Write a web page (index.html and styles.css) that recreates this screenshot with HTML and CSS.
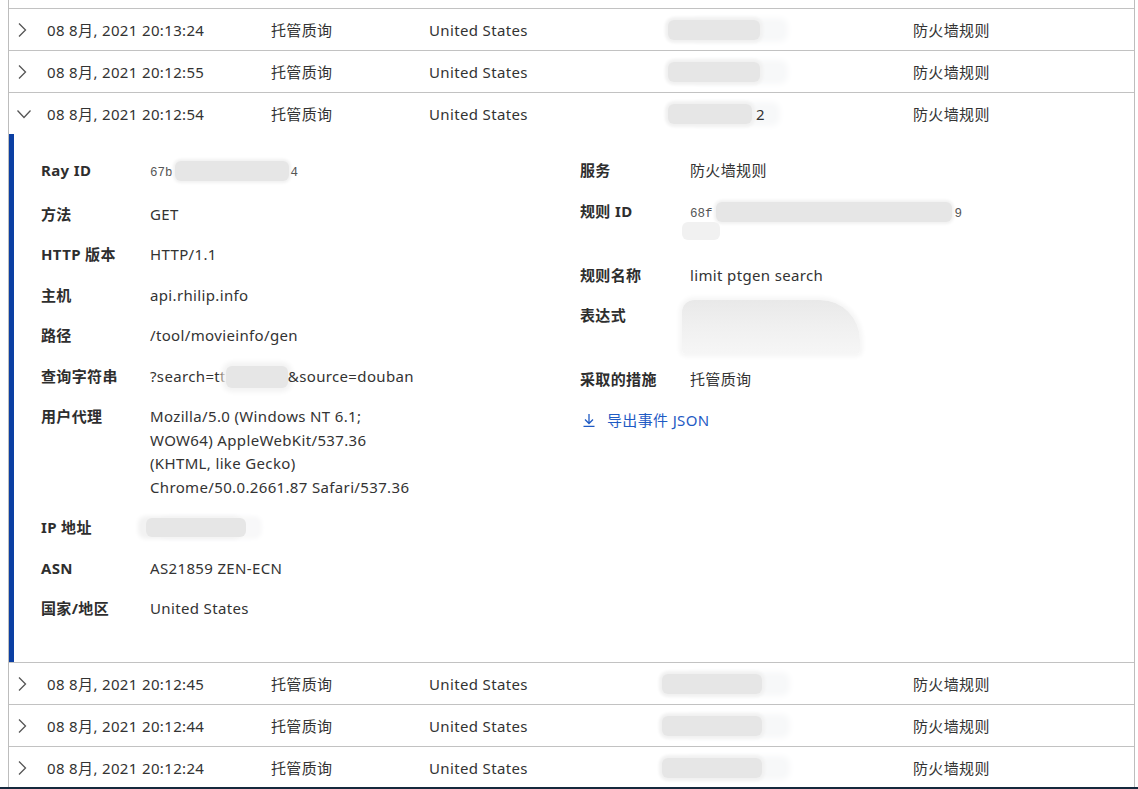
FILE: index.html
```html
<!doctype html>
<html>
<head>
	<title>防火墙事件</title>
	<meta charset="utf-8"/>
	<link rel="stylesheet" href="styles.css">
</head>
<body>

	<div class="events">
		<div class="row-clip"></div>

		<div class="event">
			<div class="event-head">
				<span class="toggle"><svg width="10" height="16" viewBox="0 0 10 16"><path d="M2 1.5 L8.5 8 L2 14.5" /></svg></span>
				<span>08 8月, 2021 20:13:24</span>
				<span>托管质询</span>
				<span>United States</span>
				<span><span class="blur blur-ip"></span></span>
				<span>防火墙规则</span>
			</div>
		</div>

		<div class="event">
			<div class="event-head">
				<span class="toggle"><svg width="10" height="16" viewBox="0 0 10 16"><path d="M2 1.5 L8.5 8 L2 14.5" /></svg></span>
				<span>08 8月, 2021 20:12:55</span>
				<span>托管质询</span>
				<span>United States</span>
				<span><span class="blur blur-ip"></span></span>
				<span>防火墙规则</span>
			</div>
		</div>

		<div class="event open">
			<div class="event-head">
				<span class="toggle"><svg width="16" height="10" viewBox="0 0 16 10"><path d="M1.5 1.5 L8 8.5 L14.5 1.5" /></svg></span>
				<span>08 8月, 2021 20:12:54</span>
				<span>托管质询</span>
				<span>United States</span>
				<span><span class="blur blur-ip-short"></span>2</span>
				<span>防火墙规则</span>
			</div>

			<div class="event-detail">
				<dl class="fields">
					<div class="field first">
						<dt>Ray ID</dt>
						<dd><span class="mono">67b</span><span class="blur blur-ray"></span><span class="mono">4</span></dd>
					</div>
					<div class="field">
						<dt>方法</dt>
						<dd>GET</dd>
					</div>
					<div class="field">
						<dt>HTTP 版本</dt>
						<dd>HTTP/1.1</dd>
					</div>
					<div class="field">
						<dt>主机</dt>
						<dd>api.rhilip.info</dd>
					</div>
					<div class="field">
						<dt>路径</dt>
						<dd>/tool/movieinfo/gen</dd>
					</div>
					<div class="field">
						<dt>查询字符串</dt>
						<dd>?search=tt<span class="blur blur-query"></span>&amp;source=douban</dd>
					</div>
					<div class="field">
						<dt>用户代理</dt>
						<dd class="ua">Mozilla/5.0 (Windows NT 6.1; WOW64) AppleWebKit/537.36 (KHTML, like Gecko) Chrome/50.0.2661.87 Safari/537.36</dd>
					</div>
					<div class="field">
						<dt>IP 地址</dt>
						<dd><span class="blur blur-addr"></span></dd>
					</div>
					<div class="field">
						<dt>ASN</dt>
						<dd>AS21859 ZEN-ECN</dd>
					</div>
					<div class="field">
						<dt>国家/地区</dt>
						<dd>United States</dd>
					</div>
				</dl>

				<dl class="fields fields-side">
					<div class="field">
						<dt>服务</dt>
						<dd>防火墙规则</dd>
					</div>
					<div class="field">
						<dt>规则 ID</dt>
						<dd class="two-lines">
							<div><span class="mono">68f</span><span class="blur blur-rule"></span><span class="mono">9</span></div>
							<div><span class="blur blur-rule-tail"></span></div>
						</dd>
					</div>
					<div class="field">
						<dt>规则名称</dt>
						<dd>limit ptgen search</dd>
					</div>
					<div class="field">
						<dt>表达式</dt>
						<dd class="two-lines"><span class="blur blur-expr"></span></dd>
					</div>
					<div class="field">
						<dt>采取的措施</dt>
						<dd>托管质询</dd>
					</div>
					<a class="export" href="#">
						<svg width="12" height="14" viewBox="0 0 12 14"><path d="M6 1 V10.5 M2 6.5 L6 10.5 L10 6.5 M0.5 13.3 H11.5" /></svg>
						导出事件 JSON
					</a>
				</dl>
			</div>
		</div>

		<div class="event">
			<div class="event-head">
				<span class="toggle"><svg width="10" height="16" viewBox="0 0 10 16"><path d="M2 1.5 L8.5 8 L2 14.5" /></svg></span>
				<span>08 8月, 2021 20:12:45</span>
				<span>托管质询</span>
				<span>United States</span>
				<span><span class="blur blur-ip blur-wide"></span></span>
				<span>防火墙规则</span>
			</div>
		</div>

		<div class="event">
			<div class="event-head">
				<span class="toggle"><svg width="10" height="16" viewBox="0 0 10 16"><path d="M2 1.5 L8.5 8 L2 14.5" /></svg></span>
				<span>08 8月, 2021 20:12:44</span>
				<span>托管质询</span>
				<span>United States</span>
				<span><span class="blur blur-ip blur-wide"></span></span>
				<span>防火墙规则</span>
			</div>
		</div>

		<div class="event last">
			<div class="event-head">
				<span class="toggle"><svg width="10" height="16" viewBox="0 0 10 16"><path d="M2 1.5 L8.5 8 L2 14.5" /></svg></span>
				<span>08 8月, 2021 20:12:24</span>
				<span>托管质询</span>
				<span>United States</span>
				<span><span class="blur blur-ip blur-wide"></span></span>
				<span>防火墙规则</span>
			</div>
		</div>
	</div>

	<div class="taskbar"></div>
</body>
</html>
```

FILE: styles.css
```css
body{
	margin: 0;
	background-color: #fff;
	color: #333;
	font-family: "Noto Sans", "Noto Sans CJK SC", sans-serif;
	font-size: 15px;
	letter-spacing: 0.35px;
}
.events{
	margin-left: 8px;
	width: 1127px;
	box-sizing: border-box;
	border-left: 1px solid #bdbdbd;
	border-right: 1px solid #bdbdbd;
}
.row-clip{
	height: 8px;
	border-bottom: 1px solid #c2c2c2;
}
.event{
	border-bottom: 1px solid #c2c2c2;
}
.event-head{
	display: grid;
	grid-template-columns: 38px 224px 158px 239px 245px 1fr;
	align-items: center;
	height: 41px;
	line-height: 20px;
	white-space: nowrap;
}
.toggle{
	display: flex;
	align-items: center;
	padding-left: 8px;
}
.open .toggle{
	padding-left: 7px;
}
.toggle svg path{
	fill: none;
	stroke: #555;
	stroke-width: 1.3;
}

/* blurred-out values */
.blur{
	display: inline-block;
	vertical-align: top;
	height: 20px;
	background-color: #e6e6e6;
	border-radius: 6px;
	box-shadow: 0 0 3px 3px #f1f1f1, 26px 0 6px 2px #f7f8f9;
}
.field .blur{
	margin-top: 2px;
}
.blur-ip{
	width: 92px;
}
.blur-ip-short{
	width: 84px;
	margin-right: 4px;
}
.blur-wide{
	margin-left: -6px;
	width: 100px;
}
.blur-ray{
	width: 114px;
	margin: 0 2px;
	box-shadow: 0 0 3px 2px #f1f1f1;
}
.field .blur-query{
	width: 62px;
	height: 22px;
	margin-top: 1px;
	box-shadow: 0 0 5px 4px #f3f3f3;
}
.field .blur-addr{
	width: 100px;
	height: 19px;
	margin-left: -4px;
	box-shadow: -6px 0 4px 2px #f2f2f2, 14px 0 4px 2px #f8f8f9;
}
.blur-rule{
	width: 236px;
	margin: 0 3px;
	box-shadow: 0 0 3px 2px #f1f1f1;
}
.field .blur-rule-tail{
	width: 38px;
	height: 18px;
	margin: -1px 0 0 -8px;
	background-color: #f1f1f1;
	box-shadow: none;
}
.two-lines{
	height: 47px;
}
.field .blur-expr{
	display: block;
	width: 178px;
	height: 54px;
	margin: -4px 0 0 -8px;
	border-radius: 12px 40px 4px 4px;
	background: linear-gradient(#e9e9e9, #f0f0f0 50%, #f6f6f6);
	box-shadow: 0 0 4px 3px #f6f6f6;
}

/* expanded detail */
.event-detail{
	display: grid;
	grid-template-columns: 539px 1fr;
	height: 528px;
	box-sizing: border-box;
	padding: 25px 0 0 27px;
	border-left: 5px solid #0b3fa3;
}
.fields{
	display: flex;
	flex-direction: column;
	gap: 17px;
	margin: 0;
}
.field{
	display: grid;
	grid-template-columns: 109px 1fr;
	line-height: 23.5px;
}
.field.first{
	margin-bottom: 3px;
}
.fields-side .field{
	grid-template-columns: 110px 1fr;
}
dt{
	font-weight: bold;
	color: #2e2e2e;
}
dd{
	margin: 0;
}
.mono{
	font-family: "Liberation Mono", monospace;
	font-size: 12.5px;
	line-height: 1;
	color: #555;
	letter-spacing: 0;
}
.ua{
	width: 268px;
}
.export{
	display: flex;
	align-items: center;
	gap: 12px;
	margin-left: 3px;
	line-height: 23.5px;
	color: #1f5bc4;
	text-decoration: none;
}
.export svg path{
	fill: none;
	stroke: #1f5bc4;
	stroke-width: 1.3;
}
.taskbar{
	position: fixed;
	left: 0;
	right: 0;
	bottom: 0;
	height: 2px;
	background-color: #15293d;
}
```
